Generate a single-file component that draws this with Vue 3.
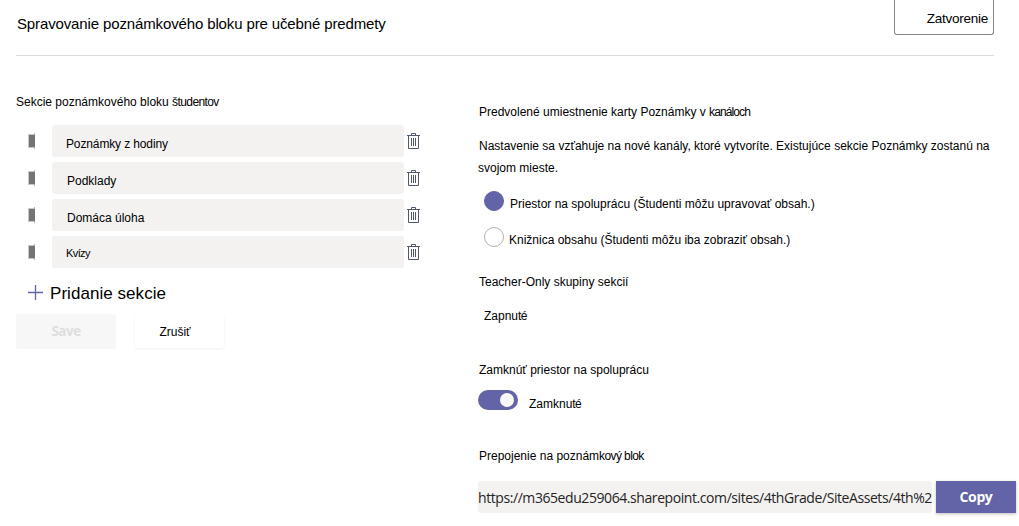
<template>
  <div class="page">
    <header class="header">
      <h1 class="title">Spravovanie poznámkového bloku pre učebné predmety</h1>
      <button class="close">Zatvorenie</button>
    </header>

    <main class="columns">
      <section class="left">
        <h2 class="label label-students">Sekcie poznámkového bloku <span class="tight">študentov</span></h2>
        <ul class="sections">
          <li v-for="section in sections" :key="section.id" class="section">
            <svg class="grip" width="7" height="16" viewBox="0 0 7 16">
              <path d="M0 1h6v14H0z" fill="#c8c8c8" />
              <path d="M1 2h5v12H1z" fill="#737373" />
              <path d="M6 0h1v16H6z" fill="#b0b0b0" />
              <path d="M6 2h1v12H6z" fill="#737373" />
            </svg>
            <div class="name" :class="section.id">{{ section.name }}</div>
            <svg class="trash" width="13" height="16" viewBox="0 0 13 16" fill="none" stroke="#50566b">
              <path d="M0 2.5h13M4.500 2V.5h4V2M1.500 3v12.500h10V3M4.500 5v8M6.500 5v8M8.500 5v8" />
            </svg>
          </li>
        </ul>
        <button class="add">
          <svg width="15" height="15" viewBox="0 0 15 15" fill="none" stroke="#6264a7">
            <path d="M7.500 0v15M0 7.500h15" stroke-width="1.300" />
          </svg>
          <span class="add-text">Pridanie sekcie</span>
        </button>
        <div class="actions">
          <button class="save" disabled>Save</button>
          <button class="cancel">Zrušiť</button>
        </div>
      </section>

      <section class="right">
        <h2 class="label label-default">Predvolené umiestnenie karty Poznámky v <span class="tight">kanáloch</span></h2>
        <p class="description">
          <span class="line first">Nastavenie sa vzťahuje na nové kanály, ktoré vytvoríte. Existujúce sekcie Poznámky zostanú na</span>
          <span class="line second">svojom mieste.</span>
        </p>
        <div class="options">
          <div v-for="option in options" :key="option.id" class="option" @click="selected = option.id">
            <span class="radio" :class="{ checked: selected === option.id }"></span>
            <span class="option-text" :class="option.id">{{ option.text }}</span>
          </div>
        </div>

        <h2 class="label label-teacher">Teacher-Only skupiny sekcií</h2>
        <p class="state">Zapnu<span class="tight">té</span></p>

        <h2 class="label label-lock">Zamknúť priestor na spoluprácu</h2>
        <div class="lock">
          <button class="toggle" :class="{ on: locked }" @click="locked = !locked"><span class="knob"></span></button>
          <span class="lock-text">Zamknu<span class="tight">té</span></span>
        </div>

        <h2 class="label label-link">Prepojenie na poznám<span class="tight">kový blok</span></h2>
        <div class="link">
          <div class="url">{{ url }}</div>
          <button class="copy">Copy</button>
        </div>
      </section>
    </main>
  </div>
</template>

<script setup>
import { ref } from 'vue'

const sections = [
  { id: 'notes', name: 'Poznámky z hodiny' },
  { id: 'handouts', name: 'Podklady' },
  { id: 'homework', name: 'Domáca úloha' },
  { id: 'quizzes', name: 'Kvízy' },
]

const options = [
  { id: 'collaboration', text: 'Priestor na spoluprácu (Študenti môžu upravovať obsah.)' },
  { id: 'library', text: 'Knižnica obsahu (Študenti môžu iba zobraziť obsah.)' },
]

const selected = ref('collaboration')
const locked = ref(true)
const url = 'https://m365edu259064.sharepoint.com/sites/4thGrade/SiteAssets/4th%2'
</script>

<style>
body {
  background: #fff;
}
</style>

<style scoped>
.page {
  width: 1019px;
  height: 526px;
  overflow: hidden;
  box-sizing: border-box;
  padding: 0 0 0 16px;
  color: #000;
  font-family: "Liberation Sans", Arial, sans-serif;
  font-size: 12px;
  line-height: 20px;
}

h1,
h2,
p,
ul {
  margin: 0;
  padding: 0;
  font-size: inherit;
  font-weight: normal;
}

button {
  box-sizing: border-box;
  margin: 0;
  padding: 0;
  border: none;
  background: none;
  color: inherit;
  font: inherit;
}

.header {
  display: flex;
  justify-content: space-between;
  align-items: flex-start;
  box-sizing: border-box;
  width: 978px;
  height: 56px;
  border-bottom: 1px solid #dcdcdc;
}

.title {
  padding: 14px 0 0 1px;
  font-size: 15px;
  letter-spacing: -0.13px;
  white-space: nowrap;
}

.close {
  width: 100px;
  height: 35px;
  padding: 3px 5px 0 0;
  border: 1px solid #858585;
  border-top: none;
  border-radius: 0 0 3px 3px;
  font-size: 13.500px;
  letter-spacing: -0.25px;
  text-align: right;
}

.columns {
  display: flex;
}

.left {
  width: 462px;
  padding-top: 36px;
}

.right {
  width: 541px;
  padding-top: 46px;
}

.label {
  white-space: nowrap;
}

.tight {
  letter-spacing: -0.6px;
}

.label-default .tight {
  letter-spacing: -0.9px;
}

.sections {
  display: flex;
  flex-direction: column;
  gap: 5px;
  margin-top: 13px;
  list-style: none;
}

.section {
  display: flex;
  align-items: center;
  height: 32px;
  padding-left: 12px;
}

.name {
  box-sizing: border-box;
  width: 352px;
  height: 32px;
  margin: 0 3px 0 17px;
  padding: 9px 0 0 14px;
  border-radius: 3px;
  background: #f3f2f1;
}

.name.notes {
  letter-spacing: -0.13px;
}

.name.handouts,
.name.homework {
  padding-left: 15px;
}

.name.quizzes {
  padding-top: 7px;
  font-size: 11px;
  letter-spacing: -0.6px;
}

.add {
  display: flex;
  align-items: center;
  gap: 7px;
  height: 20px;
  margin: 15px 0 0 12px;
  font-size: 17px;
}

.add svg {
  margin-bottom: 2px;
}

.add-text {
  padding-top: 2px;
  letter-spacing: 0.05px;
}

.actions {
  display: flex;
  align-items: flex-start;
  gap: 19px;
  margin-top: 11px;
}

.save {
  width: 100px;
  height: 35px;
  padding-bottom: 1px;
  border-radius: 2px;
  background: #f7f7f7;
  color: #dedede;
  font-family: "Open Sans", sans-serif;
  font-size: 13.500px;
  font-weight: 700;
  letter-spacing: -0.5px;
}

.cancel {
  width: 89px;
  height: 34px;
  padding: 2px 9px 0 0;
  border-radius: 3px;
  box-shadow: 0 1px 3px rgba(0, 0, 0, 0.06);
}

.label-default,
.label-teacher,
.label-lock,
.label-link {
  padding-left: 1px;
}

.description {
  margin-top: 13px;
  line-height: 22px;
  white-space: nowrap;
}

.line {
  display: block;
}

.line.first {
  padding-left: 1px;
}

.options {
  display: flex;
  flex-direction: column;
  gap: 16px;
  margin-top: 12px;
}

.option {
  display: flex;
  height: 20px;
  padding-left: 6px;
  white-space: nowrap;
}

.radio {
  box-sizing: border-box;
  width: 20px;
  height: 20px;
  border: 1px solid #b3b0ad;
  border-radius: 50%;
}

.radio.checked {
  border-color: #6264a7;
  background: #6264a7;
}

.option-text {
  margin: 3px 0 0 6px;
}

.option-text.library {
  margin-left: 5px;
}

.label-teacher {
  margin-top: 25px;
}

.state {
  margin: 14px 0 0 6px;
}

.label-lock {
  margin-top: 34px;
}

.lock {
  display: flex;
  gap: 11px;
  height: 20px;
  margin-top: 10px;
}

.toggle {
  display: flex;
  align-items: center;
  width: 40px;
  height: 20px;
  padding: 0 4px;
  border-radius: 10px;
  background: #8a8886;
}

.toggle.on {
  justify-content: flex-end;
  background: #6264a7;
}

.knob {
  width: 14px;
  height: 14px;
  border-radius: 50%;
  background: #faf9f8;
}

.lock-text {
  margin-top: 4px;
}

.label-link {
  margin-top: 36px;
}

.link {
  display: flex;
  gap: 4px;
  margin-top: 15px;
}

.url {
  width: 454px;
  height: 32px;
  overflow: hidden;
  border-radius: 3px;
  background: #f3f2f1;
  color: #252423;
  font-family: "Open Sans", sans-serif;
  font-size: 14px;
  letter-spacing: -0.425px;
  line-height: 34px;
  white-space: nowrap;
}

.copy {
  width: 80px;
  height: 32px;
  background: #6264a7;
  box-shadow: 0 1px 3px rgba(0, 0, 0, 0.25);
  color: #fff;
  font-family: "Open Sans", sans-serif;
  font-size: 14px;
  font-weight: 700;
  letter-spacing: -0.4px;
}
</style>
